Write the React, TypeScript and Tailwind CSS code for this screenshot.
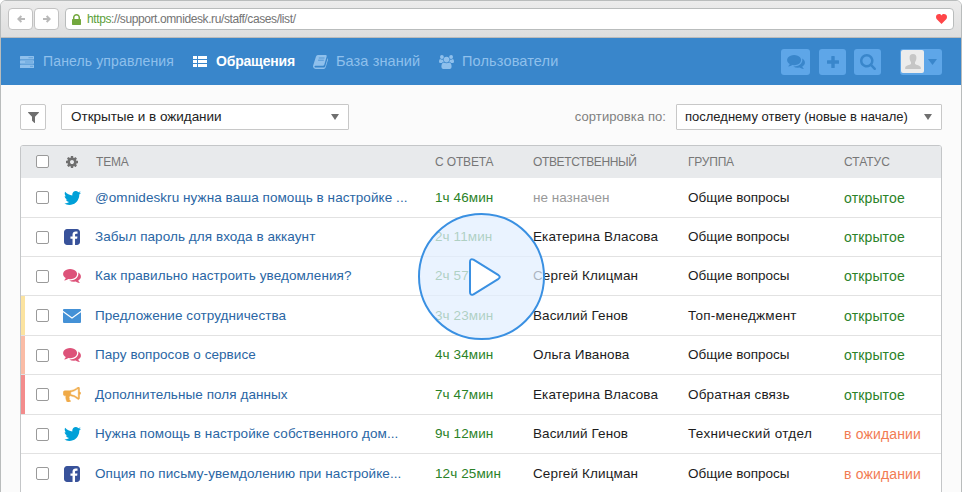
import React from "react";

const P = {
  twitter:
    "M1684 408q-67 98-162 167 1 14 1 42 0 130-38 259.5t-115.5 248.5-184.5 210.5-258 146-323 54.5q-271 0-496-145 35 4 78 4 225 0 401-138-105-2-188-64.5t-114-159.5q33 5 61 5 43 0 85-11-112-23-185.5-111.5t-73.5-205.5v-4q68 38 146 41-66-44-105-115t-39-154q0-88 44-163 121 149 294.5 238.5t371.5 99.5q-8-38-8-74 0-134 94.5-228.5t228.5-94.5q140 0 236 102 109-21 205-78-37 115-142 178 93-10 186-50z",
  facebook:
    "M1376 128q119 0 203.5 84.5t84.5 203.5v960q0 119-84.5 203.5t-203.5 84.5h-188v-595h199l30-232h-229v-148q0-56 23.5-84t91.5-28l122-1v-207q-63-9-178-9-136 0-217.5 80t-81.5 226v171h-200v232h200v595h-532q-119 0-203.5-84.5t-84.5-203.5v-960q0-119 84.5-203.5t203.5-84.5h960z",
  comments:
    "M1408 768q0 139-94 257t-256.5 186.5-353.5 68.5q-86 0-176-16-124 88-278 128-36 9-86 16h-3q-11 0-20.5-8t-11.5-21q-1-3-1-6.5t.5-6.5 2-6l2.5-5 3.5-5.5 4-5 4.5-5 4-4.5q5-6 23-25t26-29.5 22.5-29 25-38.5 20.5-44q-124-72-195-177t-71-224q0-139 94-257t256.5-186.5 353.5-68.5 353.5 68.5 256.5 186.5 94 257zm384 256q0 120-71 224.5t-195 176.5q10 24 20.5 44t25 38.5 22.5 29 26 29.5 23 25q1 1 4 4.5t4.5 5 4 5 3.5 5.5l2.5 5 2 6 .5 6.5-1 6.5q-3 14-13 22t-22 7q-50-7-86-16-154-40-278-128-90 16-176 16-271 0-472-132 58 4 88 4 161 0 309-45t264-129q125-92 192-212t67-254q0-77-23-152 129 71 204 178t75 230z",
  filter:
    "M1595 295q17 41-14 70l-493 493v742q0 42-39 59-13 5-25 5-27 0-45-19l-256-256q-19-19-19-45v-486l-493-493q-31-29-14-70 17-39 59-39h1280q42 0 59 39z",
  cog: "M1152 896q0-106-75-181t-181-75-181 75-75 181 75 181 181 75 181-75 75-181zm512-109v222q0 12-8 23t-20 13l-185 28q-19 54-39 91 35 50 107 138 10 12 10 25t-9 23q-27 37-99 108t-94 71q-12 0-26-9l-138-108q-44 23-91 38-16 136-29 186-7 28-36 28h-222q-14 0-24.5-8.5t-11.5-21.5l-28-184q-49-16-90-37l-141 107q-10 9-25 9-14 0-25-11-126-114-165-168-7-10-7-23 0-12 8-23 15-21 51-66.5t54-70.5q-27-50-41-99l-183-27q-13-2-21-12.5t-8-23.5v-222q0-12 8-23t19-13l186-28q14-46 39-92-40-57-107-138-10-12-10-24 0-10 9-23 26-36 98.5-107.5t94.5-71.5q13 0 26 10l138 107q44-23 91-38 16-136 29-186 7-28 36-28h222q14 0 24.5 8.5t11.5 21.5l28 184q49 16 90 37l142-107q9-9 24-9 13 0 25 10 129 119 165 170 7 8 7 22 0 12-8 23-15 21-51 66.5t-54 70.5q26 50 41 98l183 28q13 2 21 12.5t8 23.5z",
  lock: "M640 768h512v-192q0-106-75-181t-181-75-181 75-75 181v192zm832 96v576q0 40-28 68t-68 28h-960q-40 0-68-28t-28-68v-576q0-40 28-68t68-28h32v-192q0-184 132-316t316-132 316 132 132 316v192h32q40 0 68 28t28 68z",
  bullhorn:
    "M1664 640q53 0 90.5 37.5t37.5 90.5-37.5 90.5-90.5 37.5v384q0 52-38 90t-90 38q-417-347-812-380-58 19-91 66t-31 100.5 40 92.5q-20 33-23 65.5t6 58 33.5 55 48 50 61.5 50.5q-29 58-111.5 83t-168.5 11.5-132-55.5q-7-23-29.5-87.5t-32-94.5-23-89-15-101 3.5-98.5 22-110.5h-122q-66 0-113-47t-47-113v-192q0-66 47-113t113-47h480q435 0 896-384 52 0 90 38t38 90v384zm-128 604v-954q-394 302-768 343v270q377 42 768 341z",
  search:
    "M1216 832q0-185-131.5-316.5t-316.5-131.5-316.5 131.5-131.5 316.5 131.5 316.5 316.5 131.5 316.5-131.5 131.5-316.5zm512 832q0 52-38 90t-90 38q-54 0-90-38l-343-342q-179 124-399 124-143 0-273.5-55.5t-225-150-150-225-55.5-273.5 55.5-273.5 150-225 225-150 273.5-55.5 273.5 55.5 225 150 150 225 55.5 273.5q0 220-124 399l343 343q37 37 37 90z",
};

function Glyph({ d, box = "0 0 1792 1792", className }: { d: string; box?: string; className: string }) {
  return (
    <svg viewBox={box} className={`shrink-0 ${className}`} fill="currentColor">
      <path d={d} />
    </svg>
  );
}

function ChannelIcon({ kind }: { kind: string }) {
  switch (kind) {
    case "twitter":
      return <Glyph d={P.twitter} box="108 256 1576 1280" className="h-[14px] w-[17px] text-[#00a0d8]" />;
    case "facebook":
      return <Glyph d={P.facebook} box="128 128 1536 1536" className="h-[16px] w-[16px] text-[#38529a]" />;
    case "chat":
      return <Glyph d={P.comments} box="0 256 1792 1408" className="h-[14px] w-[18px] text-[#dd5279]" />;
    case "mail":
      return (
        <svg viewBox="0 0 18 14" className="h-[14px] w-[18px] shrink-0" fill="#4491d6">
          <path d="M1 0H17Q18 0 18 1V1.8L9 8.3L0 1.8V1Q0 0 1 0Z" />
          <path d="M0 3.3L9 9.8L18 3.3V13Q18 14 17 14H1Q0 14 0 13Z" />
        </svg>
      );
    default:
      return (
        <Glyph d={P.bullhorn} box="0 128 1792 1536" className="h-[15px] w-[18px] stroke-[#f0aa48] stroke-[50px] text-[#f0aa48]" />
      );
  }
}

type Row = {
  h: string;
  bar: string;
  icon: string;
  topic: string;
  time: string;
  owner: string;
  group: string;
  open: boolean;
};

const ROWS: Row[] = [
  { h: "h-[40px]", bar: "", icon: "twitter", topic: "@omnideskru нужна ваша помощь в настройке ...", time: "1ч 46мин", owner: "", group: "Общие вопросы", open: true },
  { h: "h-[39px]", bar: "", icon: "facebook", topic: "Забыл пароль для входа в аккаунт", time: "2ч 11мин", owner: "Екатерина Власова", group: "Общие вопросы", open: true },
  { h: "h-[39px]", bar: "", icon: "chat", topic: "Как правильно настроить уведомления?", time: "2ч 57мин", owner: "Сергей Клицман", group: "Общие вопросы", open: true },
  { h: "h-[40px]", bar: "bg-[#fbe3a0]", icon: "mail", topic: "Предложение сотрудничества", time: "3ч 23мин", owner: "Василий Генов", group: "Топ-менеджмент", open: true },
  { h: "h-[39px]", bar: "bg-[#fabca6]", icon: "chat", topic: "Пару вопросов о сервисе", time: "4ч 34мин", owner: "Ольга Иванова", group: "Общие вопросы", open: true },
  { h: "h-[40px]", bar: "bg-[#f38c8c]", icon: "horn", topic: "Дополнительные поля данных", time: "7ч 47мин", owner: "Екатерина Власова", group: "Обратная связь", open: true },
  { h: "h-[39px]", bar: "", icon: "twitter", topic: "Нужна помощь в настройке собственного дом...", time: "9ч 12мин", owner: "Василий Генов", group: "Технический отдел", open: false },
  { h: "h-[40px]", bar: "", icon: "facebook", topic: "Опция по письму-увемдолению при настройке...", time: "12ч 25мин", owner: "Сергей Клицман", group: "Общие вопросы", open: false },
];

const GROUP_TRACKING: Record<string, string> = {
  "Общие вопросы": "tracking-normal",
  "Топ-менеджмент": "tracking-[0.25px]",
  "Обратная связь": "tracking-[0.15px]",
  "Технический отдел": "tracking-[0.35px]",
};

const COLS = "grid grid-cols-[4px_38px_32px_340px_98px_155px_156px_1fr] items-center";

function Check() {
  return <span className="ml-[11px] block size-[13px] rounded-[2px] border border-[#9a9a9a] bg-white" />;
}

function Caret() {
  return (
    <svg viewBox="0 0 8 6" className="h-[6px] w-[8px] shrink-0" fill="#6f6f6f">
      <path d="M0 0H8L4 6Z" />
    </svg>
  );
}

function BrowserBar() {
  return (
    <div className="flex h-[37px] shrink-0 items-center border-b border-[#bcbcbc] bg-linear-to-b from-[#ececec] to-[#dedede] px-[7px]">
      {["M10 5H2M5.5 1.2L1.7 5L5.5 8.8", "M0 5H8M4.5 1.2L8.3 5L4.5 8.8"].map((d) => (
        <div key={d} className="mr-[1px] flex h-[22px] w-[25px] items-center justify-center rounded-[4px] border border-[#c2c2c2] bg-white">
          <svg viewBox="0 0 10 10" className="size-[8px]" fill="none" stroke="#b9b9b9" strokeWidth="2.4">
            <path d={d} />
          </svg>
        </div>
      ))}
      <div className="ml-[5px] flex h-[22px] flex-1 items-center rounded-[4px] border border-[#b9bcbc] bg-white px-[6px]">
        <Glyph d={P.lock} box="320 128 1152 1408" className="h-[11px] w-[9px] text-[#73a83e]" />
        <span className="ml-[6px] flex-1 text-[12px] leading-[20px] tracking-[-0.4px] text-[#747474]">
          <span className="text-[#5ba03a]">https</span>://support.omnidesk.ru/staff/cases/list/
        </span>
        <svg viewBox="0 0 11 10" className="h-[10px] w-[11px]" fill="#ff4548">
          <path d="M5.5 10L.8 5.3C-.4 3.9-.2 1.6 1.2.6C2.7-.4 4.6 0 5.5 1.5C6.4 0 8.3-.4 9.8.6C11.2 1.6 11.4 3.9 10.2 5.3Z" />
        </svg>
      </div>
    </div>
  );
}

function NavBar() {
  return (
    <nav className="flex h-[47px] shrink-0 items-center bg-[#3986cb] px-[19px] text-[14px] leading-[18px] text-[#8fc0ec]">
      <svg viewBox="0 0 14 12" className="h-[12px] w-[14px] shrink-0" fill="#8fc0ec">
        <rect width="14" height="3.4" rx=".5" />
        <rect y="4.3" width="14" height="3.4" rx=".5" />
        <rect y="8.6" width="14" height="3.4" rx=".5" />
        <path d="M8.5 1.7H13M5 6H13M10 10.3H13" stroke="#3986cb" strokeWidth=".5" />
      </svg>
      <span className="ml-[9px] w-[150px] pb-[1px] tracking-[0.14px] whitespace-nowrap">Панель управления</span>
      <svg viewBox="0 0 14 11" className="h-[11px] w-[14px] shrink-0" fill="#fff">
        <path d="M0 0H4V3H0ZM5 0H14V3H5ZM0 4H4V7H0ZM5 4H14V7H5ZM0 8H4V11H0ZM5 8H14V11H5Z" />
      </svg>
      <span className="ml-[9px] w-[97px] pb-[1px] font-bold tracking-[-0.2px] whitespace-nowrap text-white">Обращения</span>
      <svg viewBox="0 0 15 14" className="h-[14px] w-[15px] shrink-0">
        <path d="M4.8 0H12.6Q14 0 13.7 1.3L11.3 9.7Q10.9 10.8 9.8 10.8H2.2Q1.2 10.9 1.6 11.9Q1.9 12.4 2.8 12.4H10.9Q11.9 12.4 12.2 11.5L14.6 3.3Q15.2 3.8 15 4.7L12.7 12.3Q12.2 13.9 10.7 13.9H2.5Q.6 13.7 .1 12Q-.1 11 .3 10L3 1.500Q3.4 .1 4.8 0Z" fill="#8fc0ec" />
        <path d="M5.8 3H11.5M5.1 5.2H10.8" stroke="#3986cb" strokeWidth=".7" />
      </svg>
      <span className="ml-[8px] w-[103px] pb-[1px] text-[14.5px] tracking-[0.1px] whitespace-nowrap">База знаний</span>
      <svg viewBox="0 0 15 14" className="h-[14px] w-[15px] shrink-0" fill="currentColor">
        <circle cx="2.9" cy="2" r="1.9" />
        <circle cx="12.1" cy="2" r="1.9" />
        <circle cx="7.5" cy="4.6" r="2.8" />
        <path d="M1 3.9Q2.9 5.2 4.2 4.4Q4.1 6 4.9 7Q3.5 7.1 2.7 8H1.3Q0 8 0 6.8Q0 4.4 1 3.9ZM14 3.9Q12.1 5.2 10.8 4.4Q10.9 6 10.1 7Q11.5 7.1 12.3 8H13.7Q15 8 15 6.8Q15 4.4 14 3.9ZM4.7 7.5Q7.5 9 10.3 7.5Q12.6 7.8 12.6 11.9Q12.5 13.9 10.6 14H4.4Q2.5 13.9 2.4 11.9Q2.4 7.8 4.7 7.5Z" />
      </svg>
      <span className="ml-[8px] flex-1 pb-[1px] text-[14.5px] tracking-[0.15px] whitespace-nowrap">Пользователи</span>
      <div className="flex text-[#3986cb]">
        <div className="flex h-[26px] w-[29px] items-center justify-center rounded-[3px] bg-[#5ea6e8]">
          <Glyph d={P.comments} box="0 256 1792 1408" className="h-[14px] w-[18px]" />
        </div>
        <div className="ml-[9px] flex h-[26px] w-[27px] items-center justify-center rounded-[3px] bg-[#5ea6e8]">
          <svg viewBox="0 0 12 12" className="size-[12px]" fill="currentColor">
            <path d="M4.3.5Q4.3 0 4.8 0H7.2Q7.7 0 7.7.5V4.3H11.5Q12 4.3 12 4.8V7.2Q12 7.7 11.5 7.7H7.7V11.5Q7.7 12 7.2 12H4.8Q4.3 12 4.3 11.5V7.7H.5Q0 7.7 0 7.2V4.8Q0 4.3.5 4.3H4.3Z" />
          </svg>
        </div>
        <div className="ml-[8px] flex h-[26px] w-[27px] items-center justify-center rounded-[3px] bg-[#5ea6e8]">
          <Glyph d={P.search} box="64 128 1664 1664" className="size-[16px]" />
        </div>
        <div className="ml-[19px] flex h-[26px] w-[42px] items-center rounded-[3px] bg-[#5ea6e8] pl-[1px]">
          <span className="flex size-[23px] items-end justify-center rounded-[2px] bg-[#ececec] pb-[4px]">
            <svg viewBox="0 0 16 15" className="h-[15px] w-[16px]" fill="#c6c6c6">
              <path d="M8 0C10.4 0 11.6 1.6 11.4 4C11.3 6 10.6 7.4 10 8V10C11 11 15.5 11.4 15.8 13.5V15H.2V13.5C.5 11.4 5 11 6 10V8C5.4 7.4 4.7 6 4.6 4C4.4 1.6 5.6 0 8 0Z" />
            </svg>
          </span>
          <svg viewBox="0 0 9 6" className="mt-[1px] ml-[4px] h-[6px] w-[9px]" fill="currentColor">
            <path d="M0 0H9L4.5 6Z" />
          </svg>
        </div>
      </div>
    </nav>
  );
}

export default function App() {
  return (
    <div className="relative h-[492px] w-[962px] overflow-hidden bg-white font-['Liberation_Sans',Arial,sans-serif]">
      <div className="flex h-[500px] flex-col overflow-hidden rounded-t-[6px] border border-[#b9bcbc] bg-[#fbfbfb]">
        <BrowserBar />
        <NavBar />
        <div className="mt-[19px] flex h-[26px] shrink-0 items-center px-[19px] text-[13px] leading-[18px]">
          <div className="flex size-[26px] items-center justify-center rounded-[2px] border border-[#c8c8c8] bg-white">
            <Glyph d={P.filter} box="192 256 1408 1408" className="size-[11px] text-[#6f6f6f]" />
          </div>
          <div className="ml-[15px] flex h-[26px] w-[288px] items-center justify-between rounded-[1px] border border-[#c8c8c8] bg-white px-[9px] text-[#222]">
            <span className="text-[13.5px] tracking-[-0.02px] whitespace-nowrap">Открытые и в ожидании</span>
            <Caret />
          </div>
          <span className="mr-[10px] ml-auto tracking-[0.08px] whitespace-nowrap text-[#808080]">сортировка по:</span>
          <div className="flex h-[26px] w-[266px] items-center justify-between rounded-[1px] border border-[#c8c8c8] bg-white pr-[9px] pl-[8px] text-[#222]">
            <span className="whitespace-nowrap">последнему ответу (новые в начале)</span>
            <Caret />
          </div>
        </div>
        <div className="mx-[19px] mt-[15px] shrink-0 overflow-hidden rounded-t-[3px] border border-[#c4c6c8] bg-white text-[13.5px] leading-[18px] whitespace-nowrap">
          <div className={`h-[32px] bg-[#e8eaec] pb-[1px] text-[12px] text-[#777] ${COLS}`}>
            <span />
            <Check />
            <Glyph d={P.cog} box="128 128 1536 1536" className="ml-[3px] size-[12px] text-[#6f6f6f]" />
            <span className="pl-[1px] tracking-[-0.2px]">ТЕМА</span>
            <span className="tracking-[-0.15px]">С ОТВЕТА</span>
            <span className="tracking-[-0.35px]">ОТВЕТСТВЕННЫЙ</span>
            <span className="tracking-[-0.2px]">ГРУППА</span>
            <span>СТАТУС</span>
          </div>
          {ROWS.map((r) => (
            <div key={r.topic} className={`border-b border-[#e2e2e2] ${r.h} ${COLS}`}>
              <span className={`self-stretch ${r.bar}`} />
              <Check />
              <span className="flex w-[18px] justify-center">
                <ChannelIcon kind={r.icon} />
              </span>
              <span className="tracking-[0.07px] text-[#2a66a4]">{r.topic}</span>
              <span className="tracking-[0.1px] text-[#2b8228]">{r.time}</span>
              {r.owner ? (
                <span className="tracking-[0.12px] text-[#1c1c1c]">{r.owner}</span>
              ) : (
                <span className="text-[#999]">не назначен</span>
              )}
              <span className={`text-[#1c1c1c] ${GROUP_TRACKING[r.group]}`}>{r.group}</span>
              {r.open ? (
                <span className="text-[14px] tracking-[0.15px] text-[#2b8228]">открытое</span>
              ) : (
                <span className="text-[14px] tracking-[0.15px] text-[#f27b53]">в ожидании</span>
              )}
            </div>
          ))}
        </div>
      </div>
      <button className="absolute top-[213px] left-[418px] flex size-[127px] items-center justify-center rounded-full border-2 border-[#3a90e2] bg-[#e2eeff]/72">
        <svg viewBox="0 0 32 38" className="ml-[6px] h-[38px] w-[32px]" fill="#fff" stroke="#3a90e2" strokeWidth="2" strokeLinejoin="round">
          <path d="M1 4Q1 .2 4.5 1.7L29.5 17.2Q32 19 29.5 20.8L4.5 36.3Q1 37.8 1 34Z" />
        </svg>
      </button>
    </div>
  );
}
